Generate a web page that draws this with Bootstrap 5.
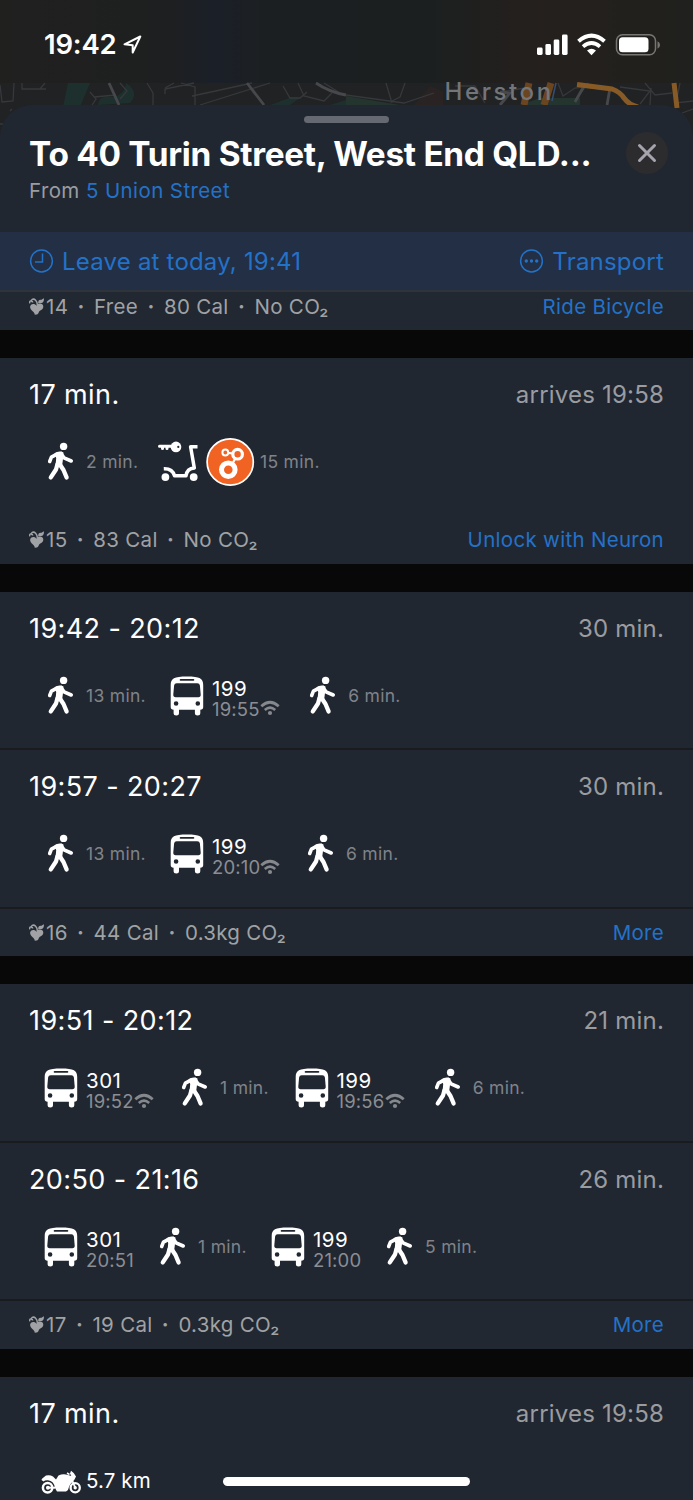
<!DOCTYPE html>
<html lang="en">
<head>
<meta charset="utf-8">
<meta name="viewport" content="width=device-width, initial-scale=1">
<title>Trip results</title>
<link href="https://cdn.jsdelivr.net/npm/bootstrap@5.3.0/dist/css/bootstrap.min.css" rel="stylesheet">
<style>
body{font-family:Inter,"Liberation Sans",sans-serif;background:#080808;color:#fff;height:1500px;overflow:hidden}
svg{display:block;flex:none}
a{color:#2472c8;text-decoration:none}
.statusbar{height:83px;background:linear-gradient(90deg,#20201f 0,#1e1f20 24%,#1b1f28 31%,#1c1f22 38%,#1c1f20 62%,#25201d 78%,#20201e 100%);padding:6px 33px 0 44px}
.clock{font-size:27.5px;font-weight:600;letter-spacing:-.2px;width:79px;padding-top:1px}
.mapstrip{overflow:visible}
.sheet{margin-top:-33px;border-radius:32px 32px 0 0;background:#212731;height:127px;position:relative}
.grabber{width:85px;height:7px;background:#656a72;top:11px;left:304px}
.dest{font-size:33.4px;font-weight:700;line-height:40px;margin-top:28.5px;padding-left:29px;letter-spacing:-.3px}
.origin{font-size:20.5px;line-height:28px;margin-top:3px;padding-left:29px;color:#9a9ca0;letter-spacing:.4px}
.closer{width:42px;height:42px;background:#2c2c2e;right:25.5px;top:27px;border:0;padding:0}
.options{height:58px;background:#222f45;color:#2472c8;font-size:24px;letter-spacing:.2px;padding:1px 29px 0}
.foot{height:47.3px;background:#212831;color:#a0a2a5;font-size:20.5px;letter-spacing:.3px;padding:1px 29px 0}
.foot.first{height:39.5px;border-top:2px solid #2f343b;padding:0 29px 7px}
.foot i{font-style:normal;font-weight:700;margin:0 3.3px}
.flora{display:inline-block;margin-right:2px;vertical-align:-1px}
.gapbar{height:28.4px}
.trip{height:158.4px;background:#212731;padding-top:17px;box-shadow:inset 0 -2px #191b1f}
.trip.solo{box-shadow:none}
.trip.solo+.foot{background:#212731}
.when{font-size:27px;line-height:40px;padding:0 29px;letter-spacing:.4px}
.when span+span{color:#9a9ca0;font-size:24px;letter-spacing:.2px}
.legs{height:60px;margin-top:17px;padding-left:44px}
.leg{color:#7f8389;font-size:17.5px;letter-spacing:.3px;white-space:nowrap;gap:8px}
.leg.hire{gap:5px}
.leg.moto{gap:5px}
.w112{width:112px}.w114{width:114px}.w115{width:115px}.w116{width:116.5px}.w126{width:126px}.w134{width:134px}.w136{width:136.2px}
.svc{margin-top:6px}
.line{color:#fff;font-size:20.5px;line-height:21px;letter-spacing:.5px}
.moto .line{letter-spacing:.1px}
.at{font-size:18.5px;line-height:21px;letter-spacing:.15px;color:#8b8e93}
.at svg{margin:-2px 0 0 .7px}
.home{width:247px;height:9px;background:#fff;left:223px;top:1477px}
</style>
</head>
<body>
<svg width="0" height="0" class="position-absolute" aria-hidden="true">
 <symbol id="walk" viewBox="0 0 34 40"><g fill="none" stroke="#fff" stroke-linecap="round" stroke-linejoin="round">
  <path stroke-width="3.6" d="M13 12.200L7.400 15.200L5.700 19.500M17 11.500L20 15.800L27.200 19"/><path stroke-width="4.300" d="M13.500 22L12 27.500L6.800 35.400M15.500 22L19.500 28L22.600 35.400"/></g>
  <path fill="#fff" d="M10.500 11.200Q15 8.300 19.500 10.500L19 17L18 24.500L11.500 24.500L12.200 16Z"/><circle cx="19.600" cy="4.400" r="3.700" fill="#fff"/></symbol>
 <symbol id="bus" viewBox="0 0 34 40"><path fill="#fff" fill-rule="evenodd" d="M.7 9C.7 2.500 4 .4 17 .4S33.200 2.500 33.200 9V31Q33.200 33.800 30.300 33.800V37Q30.300 39.500 27.600 39.500T24.900 37V33.800H9V37Q9 39.500 6.300 39.500T3.600 37V33.800Q.7 33.800 .7 31ZM10.500 3Q9.700 3 9.700 3.900T10.500 4.700H23.500Q24.300 4.700 24.300 3.900T23.500 3ZM6.700 7.300Q4.400 7.300 4.100 9.600L3.300 18.600Q3.200 21.200 5.600 21.200H28.400Q30.800 21.200 30.700 18.600L29.900 9.600Q29.600 7.300 27.300 7.300ZM6.100 25.200A2.300 2.300 0 1 0 6.100 29.800A2.300 2.300 0 1 0 6.100 25.200M27.800 25.200A2.300 2.300 0 1 0 27.800 29.800A2.300 2.300 0 1 0 27.800 25.200"/></symbol>
 <symbol id="live" viewBox="0 0 20 16"><g fill="none" stroke="#85888c"><path stroke-width="2.700" d="M1.300 6.300Q10 -1.800 18.700 6.300"/><path stroke-width="2.500" d="M4.800 10Q10 5.200 15.200 10"/></g><circle cx="10" cy="13" r="2.100" fill="#85888c"/></symbol>
 <symbol id="flora" viewBox="0 0 15 17"><path fill="#a0a2a5" d="M5.500 16.600C6.300 13.800 1.300 12.800 1.100 8.900C1.200 5.500 5.600 4.800 7.700 7.800C9 4.600 14.200 4.600 14.300 8.600C14.300 12.400 10.200 12.200 9.700 14.500C9.200 16.400 7.200 17 5.500 16.600ZM9.300 5.400C8.800 2.600 10.500 1.200 12 1.900L14.900 .3C15.300 3.400 13.500 5.600 11.700 4.900Z"/><path fill="none" stroke="#a0a2a5" stroke-width="1.500" d="M8.300 7.500C8.600 2.500 5.200 .3 3.200 1.500C1.600 2.600 2.700 4.300 4.200 3.700M.7 5.300C.4 3.400 1.300 2.600 2.500 2.700"/></symbol>
</svg>

<header class="statusbar d-flex align-items-center">
 <span class="clock">19:42</span>
 <svg width="20" height="20" viewBox="0 0 20 20"><path d="M1.500 9.300L17.300 1.500L9.700 17.500V10.300Z" fill="none" stroke="#fff" stroke-width="2" stroke-linejoin="round"/></svg>
 <svg class="ms-auto" width="124" height="24" viewBox="0 0 124 24"><g fill="#fff"><rect x="1" y="14.600" width="5.600" height="7.400" rx="1.400"/><rect x="9.400" y="11" width="5.600" height="11" rx="1.400"/><rect x="17.700" y="6.500" width="5.600" height="15.500" rx="1.400"/><rect x="26" y="1.500" width="5.600" height="20.500" rx="1.400"/></g>
  <g fill="none" stroke="#fff"><path stroke-width="4" d="M42.500 8.300Q55.500 -3 68.500 8.300"/><path stroke-width="3.800" d="M47 13.600Q55.500 6.500 64 13.600"/></g><path fill="#fff" d="M51 17.600Q55.500 14 60 17.600L55.500 22.300Z"/>
  <rect x="80.500" y="1.800" width="39" height="20" rx="6" fill="none" stroke="#777674" stroke-width="1.500"/><rect x="83" y="4.300" width="29.500" height="15" rx="3.600" fill="#fff"/><path d="M121.500 8.300Q124 9.300 124 12T121.500 15.700Z" fill="#777674"/></svg>
</header>

<svg class="mapstrip" width="693" height="55" viewBox="0 0 693 55">
 <rect width="693" height="55" fill="#202223"/>
 <path fill="#1d302e" d="M68 0H90L80 24H63ZM126 0Q140 9 130 20L98 22Q98 12 112 14Q125 12 126 0M270 22L292 14L300 15L290 22M330 22L346 17L346 22"/><path fill="#24352f" d="M346 13L400 22H346M520 22L540 15H580V22"/><path fill="#292423" d="M430 3L443 8V22H414Z"/>
 <g fill="none" stroke="#36383b" stroke-width="1.300"><path d="M0 2L2 19L13 18L14 0M22 0V6H46M40 6L45 0M10 28L12 26M0 41H4M90 9L96 16L92 22M94 14L116 12M120 0L127 8L120 16M147 0L153 10V22M165 11V6L194 0M181 0L195 4V22M192 13L211 9L252 0M174 0L165 5M200 22L270 0M283 3L290 15L300 15L307 9M298 0L304 13L324 18L332 10M324 0L340 10M346 12L404 20L434 10M386 0L392 20M405 0L400 14L390 19M455 3H475L485 20M500 9L525 5M558 0L563 13L575 5L590 3M575 18L588 0M620 4L650 8L640 21M645 0L655 12L672 10M680 0L676 20L693 18M651 5L650 22M682 30L693 26"/></g>
 <g fill="none" stroke="#46484c" stroke-width="2.800"><path d="M109 0L119 22M247 0L264 22M316 0Q329 9 346 12M575 19L584 3L600 5M610 5L607 22M500 9L510 10L500 22"/></g>
 <g fill="none" stroke="#885a25"><path stroke-width="5" d="M577 1.500L612 6Q620 9 624 15Q629 22 638 24M674 0L677 25"/><path stroke="#6b451f" stroke-width="7" d="M529 0L524 22M551 0L544 22"/></g><path d="M556 0L552 18" stroke="#354d70" stroke-width="1.500"/>
 <text x="444.500" y="17" font-size="24" font-weight="500" letter-spacing="2.600" fill="#737578">Herston</text>
</svg>

<main>
 <section class="sheet overflow-hidden">
  <div class="grabber position-absolute rounded-pill"></div>
  <h1 class="dest mb-0 text-nowrap">To 40 Turin Street, West End QLD...</h1>
  <div class="origin">From <a href="#">5 Union Street</a></div>
  <button class="closer position-absolute rounded-circle" aria-label="Close"><svg width="42" height="42" viewBox="0 0 42 42"><path d="M13.500 13.500L28.500 28.500M28.500 13.500L13.500 28.500" stroke="#a5a4ac" stroke-width="3" stroke-linecap="round"/></svg></button>
 </section>
 <nav class="options d-flex align-items-center justify-content-between">
  <span class="d-flex align-items-center"><svg class="me-2" width="25" height="25" viewBox="0 0 25 25" fill="none" stroke="#2472c8" stroke-width="1.500"><circle cx="12.500" cy="12" r="10.900"/><path d="M13.500 4.500V13H6"/></svg><span>Leave at today, 19:41</span></span>
  <span class="d-flex align-items-center"><svg class="me-2" width="25" height="25" viewBox="0 0 25 25"><circle cx="12.500" cy="12" r="10.900" fill="none" stroke="#2472c8" stroke-width="1.500"/><g fill="#2472c8"><circle cx="7.300" cy="12" r="1.700"/><circle cx="12.500" cy="12" r="1.700"/><circle cx="17.700" cy="12" r="1.700"/></g></svg><span>Transport</span></span>
 </nav>
 <div class="foot first d-flex align-items-center justify-content-between"><span><svg class="flora" width="15" height="17"><use href="#flora"/></svg>14 <i>·</i> Free <i>·</i> 80 Cal <i>·</i> No CO₂</span><a href="#">Ride Bicycle</a></div>
 <div class="gapbar"></div>

 <section>
  <div class="trip solo"><div class="when d-flex justify-content-between"><span>17 min.</span><span>arrives 19:58</span></div>
   <div class="legs d-flex align-items-center">
    <div class="leg w114 d-flex align-items-center"><svg width="34" height="40"><use href="#walk"/></svg>2 min.</div>
    <div class="leg hire d-flex align-items-center"><svg width="97" height="50" viewBox="158 436.500 97 50"><g fill="none" stroke="#fff" stroke-linecap="round" stroke-linejoin="round"><path stroke-width="3" d="M159.500 445.700H173M162.500 447V448M167 447V448"/><path stroke-width="3.500" stroke-linecap="butt" d="M197.500 446.300H190.600L194.300 467.500Q187 468 186 475.200H174.500Q172.500 468 163.800 468.300"/></g><circle cx="176" cy="446.400" r="5.300" fill="#fff"/><circle cx="178.300" cy="446.400" r="1.100" fill="#212731"/><circle cx="165.400" cy="476.600" r="3.900" fill="#fff"/><circle cx="193.700" cy="476.600" r="3.900" fill="#fff"/>
     <circle cx="230.200" cy="461.500" r="23.100" fill="#f16322" stroke="#fff" stroke-width="1.700"/><g fill="none" stroke="#fff"><circle cx="228.300" cy="469.200" r="6.800" stroke-width="5"/><circle cx="237.600" cy="453.700" r="4.800" stroke-width="3.200"/><circle cx="225.300" cy="452" r="2.900" stroke-width="2"/><path stroke-width="2.200" d="M228 452.300L233 453M235.500 457.500L232.500 463"/></g></svg><span>15 min.</span></div>
   </div></div>
  <div class="foot d-flex align-items-center justify-content-between"><span><svg class="flora" width="15" height="17"><use href="#flora"/></svg>15 <i>·</i> 83 Cal <i>·</i> No CO₂</span><a href="#">Unlock with Neuron</a></div>
 </section>
 <div class="gapbar"></div>

 <section>
  <div class="trip"><div class="when d-flex justify-content-between"><span>19:42 - 20:12</span><span>30 min.</span></div>
   <div class="legs d-flex align-items-center">
    <div class="leg w126 d-flex align-items-center"><svg width="34" height="40"><use href="#walk"/></svg>13 min.</div>
    <div class="leg w136 d-flex align-items-center"><svg width="34" height="40"><use href="#bus"/></svg><div class="svc"><div class="line">199</div><div class="at d-flex align-items-center">19:55<svg width="20" height="16"><use href="#live"/></svg></div></div></div>
    <div class="leg d-flex align-items-center"><svg width="34" height="40"><use href="#walk"/></svg>6 min.</div>
   </div></div>
  <div class="trip"><div class="when d-flex justify-content-between"><span>19:57 - 20:27</span><span>30 min.</span></div>
   <div class="legs d-flex align-items-center">
    <div class="leg w126 d-flex align-items-center"><svg width="34" height="40"><use href="#walk"/></svg>13 min.</div>
    <div class="leg w134 d-flex align-items-center"><svg width="34" height="40"><use href="#bus"/></svg><div class="svc"><div class="line">199</div><div class="at d-flex align-items-center">20:10<svg class="ms-0" width="20" height="16"><use href="#live"/></svg></div></div></div>
    <div class="leg d-flex align-items-center"><svg width="34" height="40"><use href="#walk"/></svg>6 min.</div>
   </div></div>
  <div class="foot d-flex align-items-center justify-content-between"><span><svg class="flora" width="15" height="17"><use href="#flora"/></svg>16 <i>·</i> 44 Cal <i>·</i> 0.3kg CO₂</span><a href="#">More</a></div>
 </section>
 <div class="gapbar"></div>

 <section>
  <div class="trip"><div class="when d-flex justify-content-between"><span>19:51 - 20:12</span><span>21 min.</span></div>
   <div class="legs d-flex align-items-center">
    <div class="leg w134 d-flex align-items-center"><svg width="34" height="40"><use href="#bus"/></svg><div class="svc"><div class="line">301</div><div class="at d-flex align-items-center">19:52<svg class="ms-0" width="20" height="16"><use href="#live"/></svg></div></div></div>
    <div class="leg w116 d-flex align-items-center"><svg width="34" height="40"><use href="#walk"/></svg>1 min.</div>
    <div class="leg w136 d-flex align-items-center"><svg width="34" height="40"><use href="#bus"/></svg><div class="svc"><div class="line">199</div><div class="at d-flex align-items-center">19:56<svg width="20" height="16"><use href="#live"/></svg></div></div></div>
    <div class="leg d-flex align-items-center"><svg width="34" height="40"><use href="#walk"/></svg>6 min.</div>
   </div></div>
  <div class="trip"><div class="when d-flex justify-content-between"><span>20:50 - 21:16</span><span>26 min.</span></div>
   <div class="legs d-flex align-items-center">
    <div class="leg w112 d-flex align-items-center"><svg width="34" height="40"><use href="#bus"/></svg><div class="svc"><div class="line">301</div><div class="at">20:51</div></div></div>
    <div class="leg w115 d-flex align-items-center"><svg width="34" height="40"><use href="#walk"/></svg>1 min.</div>
    <div class="leg w112 d-flex align-items-center"><svg width="34" height="40"><use href="#bus"/></svg><div class="svc"><div class="line">199</div><div class="at">21:00</div></div></div>
    <div class="leg d-flex align-items-center"><svg width="34" height="40"><use href="#walk"/></svg>5 min.</div>
   </div></div>
  <div class="foot d-flex align-items-center justify-content-between"><span><svg class="flora" width="15" height="17"><use href="#flora"/></svg>17 <i>·</i> 19 Cal <i>·</i> 0.3kg CO₂</span><a href="#">More</a></div>
 </section>
 <div class="gapbar"></div>

 <section>
  <div class="trip solo"><div class="when d-flex justify-content-between"><span>17 min.</span><span>arrives 19:58</span></div>
   <div class="legs d-flex align-items-center ps-0">
    <div class="leg moto d-flex align-items-center"><svg class="mt-1" width="81" height="25" viewBox="-41 0 81 25">
     <path fill="#fff" d="M.5 10Q.5 8.500 2.500 7.500L5 5.500Q9 4.500 12 6.500L15 9.500L17.500 5.500Q22 3.500 27 5L30.300 6L29 3.500L30 .8Q33.500 3 35 6.500L33.500 9.500L31.500 12Q28.500 14 27 20L25 21.500H16L14 18Q13 11 7 10.300Q4 10 2.500 11.500Z"/>
     <path fill="none" stroke="#fff" stroke-width="1.500" d="M26 3L28.500 4.500"/>
     <g fill="none" stroke="#fff"><circle cx="6.600" cy="17.700" r="4.700" stroke-width="2.500"/><circle cx="6.900" cy="17.700" r="1" stroke-width="1.900"/><path stroke-width="2" d="M7 17.700H14"/><circle cx="34.200" cy="17.700" r="4.600" stroke-width="2.300"/><circle cx="34.200" cy="17.700" r=".8" stroke-width="1.800"/><path stroke-width="1.800" d="M31 10L34.200 17.700"/></g></svg><span class="line">5.7 km</span></div>
   </div></div>
 </section>
</main>
<div class="home position-absolute rounded-pill"></div>
<script src="https://cdn.jsdelivr.net/npm/bootstrap@5.3.0/dist/js/bootstrap.bundle.min.js"></script>
</body>
</html>
